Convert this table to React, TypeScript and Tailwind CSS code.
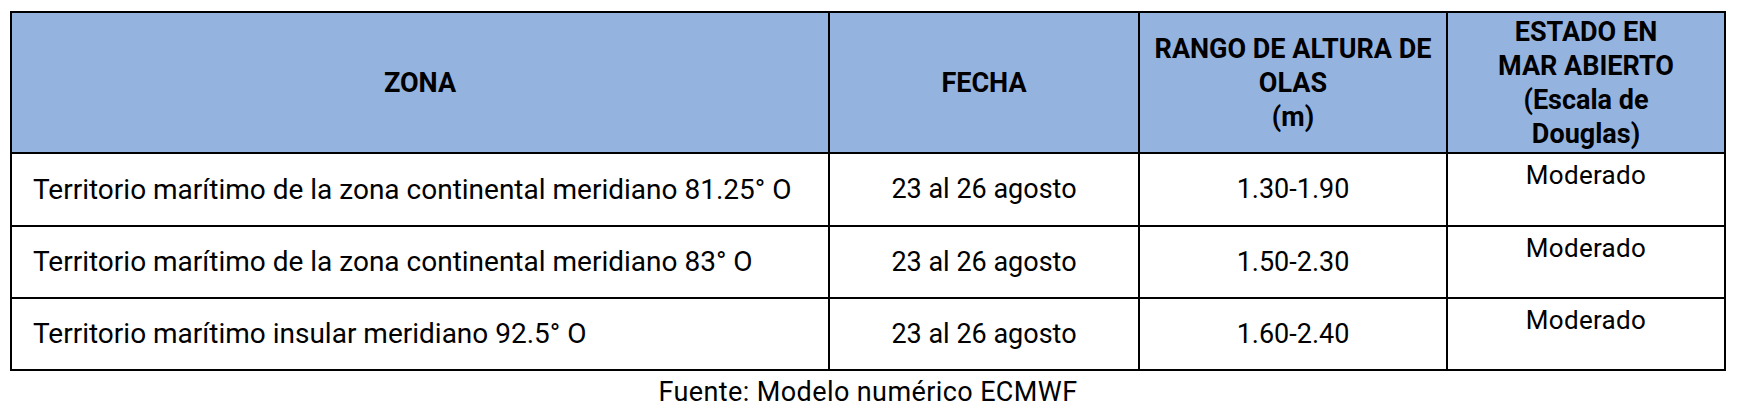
import React from 'react';

const rows = [
  { zona: 'Territorio marítimo de la zona continental meridiano 81.25° O', fecha: '23 al 26 agosto', rango: '1.30-1.90', estado: 'Moderado', h: 'h-[73px]' },
  { zona: 'Territorio marítimo de la zona continental meridiano 83° O', fecha: '23 al 26 agosto', rango: '1.50-2.30', estado: 'Moderado', h: 'h-[72px]' },
  { zona: 'Territorio marítimo insular meridiano 92.5° O', fecha: '23 al 26 agosto', rango: '1.60-2.40', estado: 'Moderado', h: 'h-[72px]' },
];

const cell = 'border-r-2 border-b-2 border-black';
const head = `${cell} h-[141px] bg-[#95b3df] flex items-center justify-center text-center font-bold text-[27px] leading-[34px]`;

export default function App() {
  return (
    <div className="w-[1744px] h-[414px] bg-white text-black font-['Roboto',sans-serif]">
      <div className="ml-[10px] pt-[11px] w-[1716px]">
        <div className="grid grid-cols-[818px_310px_308px_278px] border-l-2 border-t-2 border-black">
          {/* header */}
          <div className={head}>ZONA</div>
          <div className={head}>FECHA</div>
          <div className={head}>
            <div className="whitespace-nowrap">
              RANGO DE ALTURA DE
              <br />
              OLAS
              <br />
              (m)
            </div>
          </div>
          <div className={head}>
            <div>
              ESTADO EN
              <br />
              MAR ABIERTO
              <br />
              (Escala de
              <br />
              Douglas)
            </div>
          </div>

          {rows.map((r) => (
            <React.Fragment key={r.rango}>
              <div className={`${cell} ${r.h} flex items-center pl-[21px] text-[28px]`}>{r.zona}</div>
              <div className={`${cell} ${r.h} flex items-center justify-center text-[27px]`}>{r.fecha}</div>
              <div className={`${cell} ${r.h} flex items-center justify-center text-[27px]`}>{r.rango}</div>
              <div className={`${cell} ${r.h} pt-[5px] text-center text-[26px] leading-[32px] tracking-[0.3px]`}>{r.estado}</div>
            </React.Fragment>
          ))}
        </div>
        <div className="text-center text-[27px] leading-[42px] tracking-[0.4px]">Fuente: Modelo numérico ECMWF</div>
      </div>
    </div>
  );
}
